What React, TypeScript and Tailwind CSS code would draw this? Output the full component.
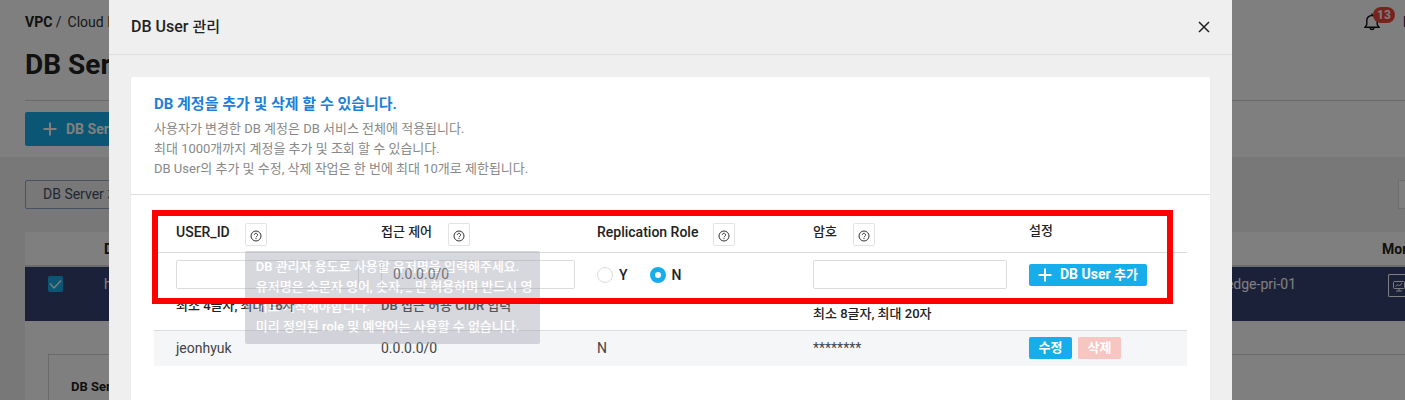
import React from 'react'

const Help = () => (
    <svg viewBox="0 0 12 12" className="w-3 h-3" fill="none" stroke="currentColor">
        <circle cx="6" cy="6" r="5" />
        <path d="M4.4 4.9a1.6 1.6 0 1 1 2.5 1.3c-.6.4-.9.6-.9 1.1" />
        <path d="M6 8.1v1" />
    </svg>
)

const Plus = () => (
    <svg viewBox="0 0 14 14" className="w-[14px] h-[14px]" fill="none" stroke="currentColor" strokeWidth="2">
        <path d="M7 .5v13M.5 7h13" />
    </svg>
)

const HelpButton = ({ label }: { label: string }) => (
    <button aria-label={label} className="flex w-[22px] h-[23px] items-center justify-center rounded-xs border border-[#e3e3e3] bg-white pt-[3px] text-[#333]">
        <Help />
    </button>
)

const input = 'block h-[29px] w-full rounded-xs border border-[#dcdcdc] bg-white px-[11px] text-sm font-normal text-[#555] placeholder:text-[#555] outline-none'
const radio = 'w-4 h-4 appearance-none rounded-full border border-[#dcdcdc] bg-white checked:border-[5px] checked:border-[#16adea]'

function ServerPage() {
    return (
        <div className="absolute inset-0 flex flex-col overflow-hidden bg-[#f0f0f0]">
            <header className="h-[157px] shrink-0 bg-white pl-[25px]">
                <div className="flex h-[44px] items-center justify-between">
                    <p className="flex gap-[6px] text-sm leading-5 text-[#333]"><span><b className="font-bold text-[#222]">VPC</b> /</span><span>Cloud DB for MySQL</span></p>
                    <div className="flex items-center">
                        <button aria-label="알림" className="relative w-[39px] h-[22px]">
                            <svg viewBox="0 0 16 18" className="w-4 h-[18px]" fill="none" stroke="#111" strokeWidth="1.4">
                                <path d="M1 14.2h14l-1.8-2.6V7.5C13.2 4.5 11 2.5 8 2.5S2.8 4.5 2.8 7.5v4.1L1 14.2z" />
                                <path d="M6 14.8c.3 1.3 1 1.7 2 1.7s1.7-.4 2-1.7M8 .6v1.9" />
                            </svg>
                            <span className="absolute left-[9px] -top-[4px] h-4 w-[22px] rounded-full bg-[#f04438] text-center text-xs font-bold leading-4 text-white">13</span>
                        </button>
                        <span className="w-[2px] overflow-hidden text-sm font-bold text-[#101060]">I</span>
                    </div>
                </div>
                <h1 className="h-[57px] border-b border-[#d4d4d4] pt-[5px] text-[28px] leading-8 font-bold text-[#222]">DB Server</h1>
                <button className="mt-[11px] flex h-[34px] items-center gap-[9px] rounded-xs bg-[#16adea] px-[18px] text-sm font-bold text-white"><Plus />DB Server 생성</button>
            </header>
            <div className="flex shrink-0 justify-between py-[23px] pl-[25px]">
                <button className="h-[29px] rounded-xs border border-[#8aa4c8] px-[17px] text-sm text-[#444f66]">DB Server <span className="text-[13px]">제어</span></button>
                <div className="h-[29px] w-[7px] border-y border-l border-[#ddd] bg-white" />
            </div>
            <div className="ml-[25px] grow bg-white">
                <div className="flex h-[35px] items-center justify-between border-b-2 border-[#d8d8d8] pl-[79px] text-sm font-bold text-[#222]">
                    <span>DB Server</span>
                    <span className="w-[23px] overflow-hidden">Monitoring</span>
                </div>
                <div className="flex h-[54px] justify-between bg-[#384274] pt-[7px] text-sm text-white">
                    <div className="flex">
                        <span className="ml-[23px] mt-[2px] flex h-4 w-[15px] items-center rounded-xs bg-[#16adea]">
                            <svg viewBox="0 0 15 16" className="w-[15px] h-4" fill="none" stroke="white" strokeWidth="1.3"><path d="M2 7.5 6 12l7-7.5" /></svg>
                        </span>
                        <span className="ml-[41px] leading-5">hyuk-db</span>
                    </div>
                    <div className="flex">
                        <span className="leading-5">hyuk-db-edge-pri-01</span>
                        <button aria-label="모니터링" className="ml-[92px] flex h-[23px] w-[17px] items-center rounded-l-xs border-y border-l border-white pl-1">
                            <svg viewBox="0 0 12 12" className="h-3 w-3 shrink-0" fill="none" stroke="white">
                                <rect x=".5" y="1.5" width="11" height="7" rx="1" />
                                <path d="M2.5 6.5 5 4.5l1.5 1.5L9 3M6 8.5V11M3 11h6" />
                            </svg>
                        </button>
                    </div>
                </div>
                <div className="ml-[23px] mt-[33px] h-20 border-t border-l border-[#d4d4d4] pl-[22px] pt-[22px] text-[13px] leading-5 font-bold text-[#222]">DB Server 상세정보</div>
            </div>
        </div>
    )
}

export default function App() {
    return (
        <div className="relative h-screen overflow-hidden font-['Roboto','Noto_Sans_CJK_KR',sans-serif]">
            <ServerPage />
            <div className="absolute inset-0 bg-black/50" />

            <div role="dialog" aria-label="DB User 관리" className="relative ml-[109px] mr-[173px] min-h-full bg-[#efefef]">
                <div className="flex h-[55px] items-center justify-between border-b border-[#dedede] px-[22px]">
                    <h2 className="text-base leading-6 font-medium text-[#222]">DB User <span className="text-[15px]">관리</span></h2>
                    <button aria-label="닫기">
                        <svg viewBox="0 0 12 12" className="w-3 h-3" fill="none" stroke="#222" strokeWidth="1.5"><path d="m1 1 10 10M11 1 1 11" /></svg>
                    </button>
                </div>

                <div className="mx-[22px] mt-[22px] min-h-[340px] rounded-xs bg-white shadow-xs">
                    <div className="h-[118px] border-b border-[#dedede] px-[23px] pt-[15px]">
                        <h3 className="mb-[3px] text-[15px] leading-6 font-bold text-[#1c80d9]">DB 계정을 추가 및 삭제 할 수 있습니다.</h3>
                        <p className="text-[13px] leading-5 text-[#888]">
                            사용자가 변경한 DB 계정은 DB 서비스 전체에 적용됩니다.<br />
                            최대 1000개까지 계정을 추가 및 조회 할 수 있습니다.<br />
                            DB User의 추가 및 수정, 삭제 작업은 한 번에 최대 10개로 제한됩니다.
                        </p>
                    </div>

                    <div className="relative mx-[23px] mt-[18px]">
                        <table className="w-full table-fixed border-collapse text-left text-sm leading-5 text-[#222]">
                            <colgroup>
                                <col className="w-[205px]" />
                                <col className="w-[216px]" />
                                <col className="w-[216px]" />
                                <col className="w-[216px]" />
                                <col />
                            </colgroup>
                            <thead>
                                <tr className="h-[39px] border-b border-[#dcdcdc]">
                                    <th className="pl-[22px] font-medium">
                                        <div className="flex items-center gap-[15px]">USER_ID
                                            <div className="relative pt-1">
                                                <HelpButton label="USER_ID 도움말" />
                                                <div role="tooltip" className="absolute left-0 top-full z-10 mt-[5px] w-[295px] rounded-xs bg-[#9d9faf] pl-[11px] pt-[6px] pb-[7px] text-[13px] leading-5 whitespace-nowrap text-white opacity-40">
                                                    DB 관리자 용도로 사용할 유저명을 입력해주세요.<br />
                                                    유저명은 소문자 영어, 숫자, _ 만 허용하며 반드시 영<br />
                                                    어로 시작해야합니다.<br />
                                                    미리 정의된 role 및 예약어는 사용할 수 없습니다.
                                                </div>
                                            </div>
                                        </div>
                                    </th>
                                    <th className="pl-[22px] text-[13px] font-medium">
                                        <div className="flex items-center gap-4">접근 제어<div className="pt-1"><HelpButton label="접근 제어 도움말" /></div></div>
                                    </th>
                                    <th className="pl-[22px] font-medium">
                                        <div className="flex items-center gap-[15px]">Replication Role<div className="pt-1"><HelpButton label="Replication Role 도움말" /></div></div>
                                    </th>
                                    <th className="pl-[22px] text-[13px] font-medium">
                                        <div className="flex items-center gap-4">암호<div className="pt-1"><HelpButton label="암호 도움말" /></div></div>
                                    </th>
                                    <th className="pb-[2px] pl-[22px] text-[13px] font-medium">설정</th>
                                </tr>
                            </thead>
                            <tbody>
                                <tr className="h-[78px] border-b border-[#dcdcdc] align-top font-medium">
                                    <td className="pt-[7px] pl-[22px]">
                                        <input aria-label="USER_ID" className={input} />
                                        <p className="mt-[7px] text-[13px]">최소 4글자, 최대 16자</p>
                                    </td>
                                    <td className="pt-[7px] pl-[22px]">
                                        <input aria-label="접근 제어" placeholder="0.0.0.0/0" className={input} />
                                        <p className="mt-[7px] text-[13px]">DB 접근 허용 CIDR 입력</p>
                                    </td>
                                    <td className="pt-3 pl-[22px]">
                                        <div className="flex gap-[22px]">
                                            <label className="flex items-center gap-[6px]"><input type="radio" name="replication" className={radio} />Y</label>
                                            <label className="flex items-center gap-[6px]"><input type="radio" name="replication" defaultChecked className={radio} />N</label>
                                        </div>
                                    </td>
                                    <td className="pt-[7px] pl-[22px]">
                                        <input type="password" aria-label="암호" className={input} />
                                        <p className="mt-[15px] text-[13px]">최소 8글자, 최대 20자</p>
                                    </td>
                                    <td className="pt-[11px] pl-[22px]">
                                        <button className="flex h-[22px] items-center gap-2 rounded-xs bg-[#16adea] px-[9px] font-bold text-white"><Plus /><span>DB User <span className="text-[13px]">추가</span></span></button>
                                    </td>
                                </tr>
                                <tr className="h-9 bg-[#f5f6f8] text-[#444]">
                                    <td className="pl-[22px]">jeonhyuk</td>
                                    <td className="pl-[22px]">0.0.0.0/0</td>
                                    <td className="pl-[22px]">N</td>
                                    <td className="pl-[22px]">********</td>
                                    <td className="pl-[22px]">
                                        <div className="flex gap-[6px] text-[13px] font-bold text-white">
                                            <button className="h-[22px] w-[43px] rounded-xs bg-[#16adea] leading-[22px]">수정</button>
                                            <button className="h-[22px] w-[43px] rounded-xs bg-[#f7c5c2] leading-[22px]">삭제</button>
                                        </div>
                                    </td>
                                </tr>
                            </tbody>
                        </table>
                        {/* highlight around the add row */}
                        <div className="pointer-events-none absolute -left-[2px] -top-[3px] right-[14px] z-20 h-[94px] border-6 border-[#ff0000]" />
                    </div>
                </div>
            </div>
        </div>
    )
}
